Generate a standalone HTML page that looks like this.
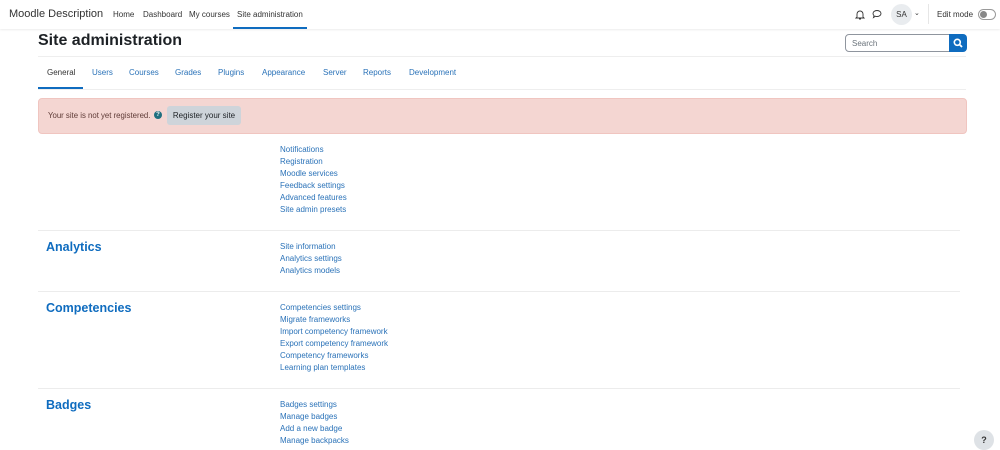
<!DOCTYPE html>
<html><head><meta charset="utf-8"><style>
*{margin:0;padding:0;box-sizing:border-box}
body{width:1000px;height:447px;overflow:hidden;background:#fff;font-family:"Liberation Sans",sans-serif;color:#1d2125;position:relative}
.a{position:absolute;white-space:nowrap}
.nav{position:absolute;left:0;top:0;width:1000px;height:29px;background:#fff;box-shadow:0 1px 2px rgba(0,0,0,.08)}
.lk{color:#2a72b8;font-size:8px}
.h{color:#0f6cbf;font-size:12.5px;font-weight:bold}
.hr{position:absolute;left:38px;width:922px;height:1px;background:#ececec}
.tab{font-size:8px;color:#2a72b8;top:68px}
</style></head><body>
<div class="nav">
<div class="a" style="left:9px;top:8px;font-size:11px;color:#333">Moodle Description</div>
<div class="a" style="left:113px;top:10px;font-size:8px;color:#333">Home</div>
<div class="a" style="left:143px;top:10px;font-size:8px;color:#333">Dashboard</div>
<div class="a" style="left:189px;top:10px;font-size:8px;color:#333">My courses</div>
<div class="a" style="left:237px;top:10px;font-size:8px;color:#333">Site administration</div>
<div class="a" style="left:233px;top:27px;width:74px;height:2px;background:#0f6cbf"></div>
<svg class="a" style="left:855px;top:9px" width="10" height="11" viewBox="0 0 10 11"><path d="M2 8V5a3 3 0 0 1 6 0v3l1 1H1z M4 10h2" fill="none" stroke="#333" stroke-width="0.9"/></svg>
<svg class="a" style="left:872px;top:9px" width="10" height="10" viewBox="0 0 10 10"><path d="M5 1.5c2.3 0 4 1.3 4 3s-1.7 3-4 3c-.6 0-1.1-.1-1.6-.3L1.5 8.5l.6-1.8C1.4 6.1 1 5.3 1 4.5c0-1.7 1.7-3 4-3z" fill="none" stroke="#333" stroke-width="0.9"/></svg>
<div class="a" style="left:891px;top:4px;width:21px;height:21px;border-radius:50%;background:#e9ecef;font-size:8px;line-height:21px;text-align:center;color:#333">SA</div>
<div class="a" style="left:914px;top:9px;font-size:7px;color:#333">⌄</div>
<div class="a" style="left:928px;top:4px;width:1px;height:20px;background:#e6e6e6"></div>
<div class="a" style="left:937px;top:10px;font-size:8px;color:#333">Edit mode</div>
<div class="a" style="left:978px;top:9px;width:18px;height:11px;border:1px solid #999;border-radius:6px"><div style="position:absolute;left:1px;top:1px;width:7px;height:7px;border-radius:50%;background:#888"></div></div>
</div>
<div class="a" style="left:38px;top:32px;font-size:16px;font-weight:bold;color:#1d2125">Site administration</div>
<div class="a" style="left:845px;top:34px;width:105px;height:18px;border:1px solid #8f959e;border-radius:4px 0 0 4px;font-size:8px;color:#6a737b;padding:4px 6px">Search</div>
<div class="a" style="left:949px;top:34px;width:18px;height:18px;background:#0f6cbf;border-radius:0 4px 4px 0"><svg width="18" height="18" viewBox="0 0 18 18"><circle cx="8.3" cy="8.3" r="3" fill="none" stroke="#fff" stroke-width="1.6"/><path d="M10.5 10.5l2.5 2.5" stroke="#fff" stroke-width="1.8"/></svg></div>
<div class="a" style="left:38px;top:56px;width:928px;height:1px;background:#eee"></div>
<div class="a tab" style="left:47px;color:#333">General</div>
<div class="a" style="left:38px;top:87px;width:45px;height:2px;background:#0f6cbf"></div>
<div class="a tab" style="left:92px">Users</div>
<div class="a tab" style="left:129px">Courses</div>
<div class="a tab" style="left:175px">Grades</div>
<div class="a tab" style="left:218px">Plugins</div>
<div class="a tab" style="left:262px">Appearance</div>
<div class="a tab" style="left:323px">Server</div>
<div class="a tab" style="left:363px">Reports</div>
<div class="a tab" style="left:409px">Development</div>
<div class="a" style="left:38px;top:89px;width:928px;height:1px;background:#eee"></div>
<div class="a" style="left:38px;top:98px;width:929px;height:36px;background:#f4d6d2;border-radius:4px;border:1px solid #f0c5c0"></div>
<div class="a" style="left:48px;top:111px;font-size:7.8px;color:#5e3a36">Your site is not yet registered.</div>
<div class="a" style="left:154px;top:111px;width:8px;height:8px;border-radius:50%;background:#1f6f7f;color:#fff;font-size:6px;line-height:8px;text-align:center;font-weight:bold">?</div>
<div class="a" style="left:167px;top:106px;width:74px;height:19px;background:#ced4da;border-radius:3px;font-size:8px;line-height:19px;text-align:center;color:#1d2125">Register your site</div>

<div class="a lk" style="left:280px;top:144px;line-height:11.9px">Notifications<br>Registration<br>Moodle services<br>Feedback settings<br>Advanced features<br>Site admin presets</div>
<div class="hr" style="top:230px"></div>
<div class="a h" style="left:46px;top:240px">Analytics</div>
<div class="a lk" style="left:280px;top:241px;line-height:11.9px">Site information<br>Analytics settings<br>Analytics models</div>
<div class="hr" style="top:291px"></div>
<div class="a h" style="left:46px;top:301px">Competencies</div>
<div class="a lk" style="left:280px;top:302px;line-height:11.9px">Competencies settings<br>Migrate frameworks<br>Import competency framework<br>Export competency framework<br>Competency frameworks<br>Learning plan templates</div>
<div class="hr" style="top:388px"></div>
<div class="a h" style="left:46px;top:398px">Badges</div>
<div class="a lk" style="left:280px;top:399px;line-height:11.9px">Badges settings<br>Manage badges<br>Add a new badge<br>Manage backpacks</div>
<div class="a" style="left:974px;top:430px;width:20px;height:20px;border-radius:50%;background:#dee2e6;font-size:9px;font-weight:bold;line-height:20px;text-align:center;color:#333">?</div>
</body></html>
